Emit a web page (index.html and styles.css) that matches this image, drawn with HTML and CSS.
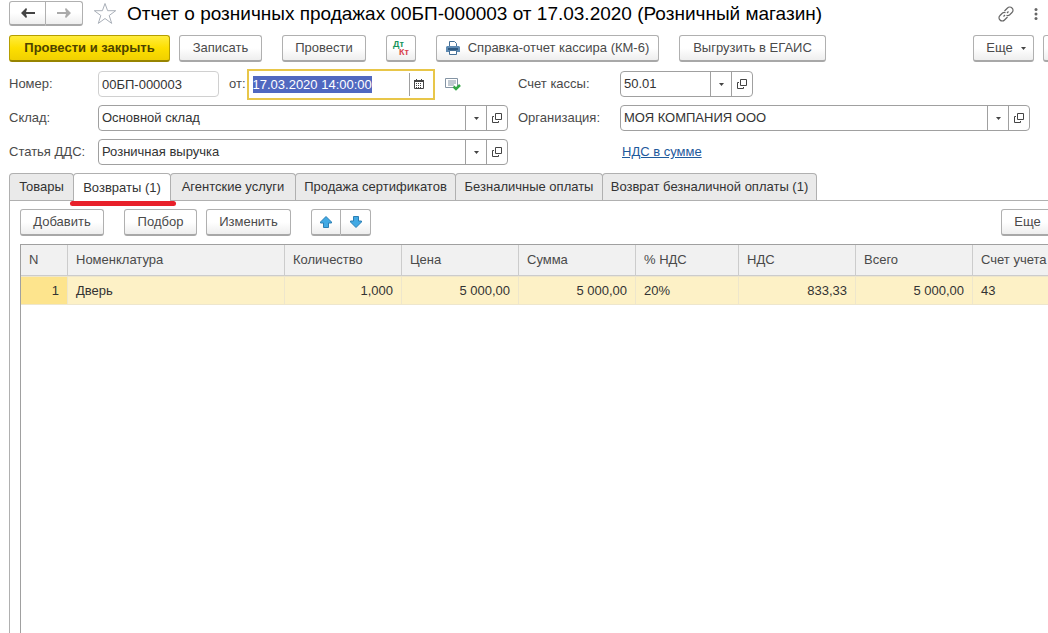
FILE: index.html
```html
<!DOCTYPE html>
<html lang="ru">
<head>
<meta charset="utf-8">
<meta name="viewport" content="width=device-width, initial-scale=1">
<title>Отчет о розничных продажах</title>
<link rel="stylesheet" href="styles.css">
</head>
<body>
<svg class="defs" aria-hidden="true">
  <symbol id="open" viewBox="0 0 10 10"><path d="M3.500 .5h6v6h-6z M2 3.500H.5v6h6V8" fill="none" stroke="#444"/></symbol>
  <symbol id="caret" viewBox="0 0 5 3"><path d="M0 0h5L2.5 3z" fill="#444"/></symbol>
</svg>
<header class="titlebar">
  <div class="pair nav">
    <button class="btn" aria-label="Назад"><svg width="14" height="10" viewBox="0 0 14 10"><path d="M14 4v2H5l1 3-1 1-5-5 5-5 1 1-1 3z" fill="#444"/></svg></button>
    <button class="btn" aria-label="Вперед"><svg width="14" height="10" viewBox="0 0 14 10"><path d="M0 4v2h9l-1 3 1 1 5-5-5-5-1 1 1 3z" fill="#aaa"/></svg></button>
  </div>
  <button class="plain star" aria-label="В избранное"><svg width="24" height="23" viewBox="0 0 24 23"><path d="M12 1.500l2.600 7.200h8.100l-6.500 4.800 2.500 7.900-6.700-4.900-6.700 4.900 2.500-7.900L1.300 8.700h8.100z" fill="#fff" stroke="#a9afb8"/></svg></button>
  <h1>Отчет о розничных продажах 00БП-000003 от 17.03.2020 (Розничный магазин)</h1>
  <button class="plain" aria-label="Ссылка"><svg width="16" height="16" viewBox="0 0 16 16"><g fill="none" stroke="#666" stroke-width="1.200"><path d="M6.500 5L9.500 2a3 3 0 0 1 4.500 0 3 3 0 0 1 0 4.500L11.500 9q-1.500 1-3 .3M9.500 11L6.500 14A3 3 0 0 1 2 14a3 3 0 0 1 0-4.500L4.500 7q1.500-1 3-.3M5.500 10.500l1.500-1.500M9 7l1.500-1.500"/></g></svg></button>
  <button class="plain dots" aria-label="Меню"><svg width="4" height="12" viewBox="0 0 4 12"><g fill="#666"><circle cx="2" cy="1.500" r="1.500"/><circle cx="2" cy="6" r="1.500"/><circle cx="2" cy="10.500" r="1.500"/></g></svg></button>
</header>
<div class="commands">
  <button class="btn primary">Провести и закрыть</button>
  <button class="btn write">Записать</button>
  <button class="btn post">Провести</button>
  <button class="btn dtkt" aria-label="Дт Кт"><span class="dt">Дт</span><span class="kt">Кт</span></button>
  <button class="btn print"><svg width="14" height="14" viewBox="0 0 14 14"><path d="M3.500 5V.5H8.500L10.500 2.500v3" fill="#fff" stroke="#456f96"/><path d="M1 5h12l1 1v5H0V6z" fill="#5f8bb3"/><path d="M2 7h10v2H2z" fill="#2f5a82"/><path d="M3.500 9.500h7v4h-7z" fill="#fff" stroke="#456f96"/></svg>Справка-отчет кассира (КМ-6)</button>
  <button class="btn egais">Выгрузить в ЕГАИС</button>
  <button class="btn more">Еще<svg width="5" height="3"><use href="#caret"/></svg></button>
  <button class="btn help" aria-label="Справка"></button>
</div>
<form class="form">
  <label for="num">Номер:</label>
  <div class="line">
    <input class="num" id="num" value="00БП-000003">
    <label for="date">от:</label>
    <div class="date">
      <div class="datetext"><input id="date" value="17.03.2020 14:00:00"></div>
      <button type="button" class="plain cal" aria-label="Календарь"><svg width="10" height="10" viewBox="0 0 10 10"><path d="M.5 1.500h9v8h-9z" fill="#fff" stroke="#444"/><path d="M0 1h10v2H0zM2 0h1v1H2zM7 0h1v1H7z" fill="#444"/><path d="M2 4.500h6M2 6.500h6M2 8.500h6" stroke="#444" stroke-dasharray="1 1"/></svg></button>
    </div>
    <svg class="posted" width="16" height="13" viewBox="0 0 16 13"><path d="M.5.5h12v9H.5z" fill="#fff" stroke="#8494a4"/><path d="M3 3h8M3 5h8M3 7h6" stroke="#8494a4"/><path d="M8.500 8.500l2.500 2.500L15 7" fill="none" stroke="#35a847" stroke-width="2.500"/></svg>
  </div>
  <label for="acc">Счет кассы:</label>
  <div class="combo short"><input id="acc" value="50.01"><button type="button" aria-label="Выбрать"><svg width="5" height="3"><use href="#caret"/></svg></button><button type="button" aria-label="Открыть"><svg width="10" height="10"><use href="#open"/></svg></button></div>

  <label for="store">Склад:</label>
  <div class="combo"><input id="store" value="Основной склад"><button type="button" aria-label="Выбрать"><svg width="5" height="3"><use href="#caret"/></svg></button><button type="button" aria-label="Открыть"><svg width="10" height="10"><use href="#open"/></svg></button></div>
  <label for="org">Организация:</label>
  <div class="combo"><input id="org" value="МОЯ КОМПАНИЯ ООО"><button type="button" aria-label="Выбрать"><svg width="5" height="3"><use href="#caret"/></svg></button><button type="button" aria-label="Открыть"><svg width="10" height="10"><use href="#open"/></svg></button></div>

  <label for="dds">Статья ДДС:</label>
  <div class="combo"><input id="dds" value="Розничная выручка"><button type="button" aria-label="Выбрать"><svg width="5" height="3"><use href="#caret"/></svg></button><button type="button" aria-label="Открыть"><svg width="10" height="10"><use href="#open"/></svg></button></div>
  <a class="vat" href="#vat">НДС в сумме</a>
</form>
<nav class="tabs" role="tablist">
  <button role="tab" class="t-goods">Товары</button>
  <button role="tab" class="t-returns active" aria-selected="true">Возвраты (1)</button>
  <button role="tab" class="t-agent">Агентские услуги</button>
  <button role="tab" class="t-cert">Продажа сертификатов</button>
  <button role="tab" class="t-card">Безналичные оплаты</button>
  <button role="tab" class="t-refund">Возврат безналичной оплаты (1)</button>
</nav>
<main class="panel">
  <div class="tools">
    <button class="btn add">Добавить</button>
    <button class="btn pick">Подбор</button>
    <button class="btn edit">Изменить</button>
    <div class="pair arrows">
      <button class="btn" aria-label="Вверх"><svg width="12" height="12" viewBox="0 0 12 12"><path d="M6 .5L11.500 6v1H8.500v4.500h-5V7H.5V6z" fill="#41a9e4" stroke="#2b7fb4"/></svg></button>
      <button class="btn" aria-label="Вниз"><svg width="12" height="12" viewBox="0 0 12 12"><path d="M6 11.500L.5 6V5h3V.5h5V5h3v1z" fill="#41a9e4" stroke="#2b7fb4"/></svg></button>
    </div>
    <button class="btn more">Еще<svg width="5" height="3"><use href="#caret"/></svg></button>
  </div>
  <div class="grid">
    <table>
      <colgroup><col class="c-n"><col><col class="c-m"><col class="c-m"><col class="c-m"><col class="c-p"><col class="c-m"><col class="c-m"><col class="c-l"></colgroup>
      <thead><tr><th>N</th><th>Номенклатура</th><th>Количество</th><th>Цена</th><th>Сумма</th><th>% НДС</th><th>НДС</th><th>Всего</th><th>Счет учета</th></tr></thead>
      <tbody><tr><td class="r cur">1</td><td>Дверь</td><td class="r">1,000</td><td class="r">5 000,00</td><td class="r">5 000,00</td><td>20%</td><td class="r">833,33</td><td class="r">5 000,00</td><td>43</td></tr></tbody>
    </table>
  </div>
</main>
</body>
</html>
```
FILE: styles.css
```css
* { box-sizing: border-box; }
body {
  margin: 0;
  min-height: 100vh;
  display: flex;
  flex-direction: column;
  overflow: hidden;
  background: #fff;
  color: #333;
  font: 13px/16px "Liberation Sans", Arial, sans-serif;
}
button, input { font: inherit; color: inherit; margin: 0; }
button { white-space: nowrap; }
svg { flex: none; display: block; }
.defs { position: absolute; width: 0; height: 0; }

.btn {
  display: flex;
  align-items: center;
  justify-content: center;
  flex: none;
  height: 27px;
  padding: 0;
  color: #4a4a4a;
  border: 1px solid #b0b0b0;
  border-bottom: 2px solid #a8a8a8;
  border-radius: 3px;
  background: linear-gradient(#fff 50%, #eee);
}
.plain { display: flex; padding: 0; border: 0; background: none; }
.pair { display: flex; flex: none; }
.pair .btn:first-child { border-radius: 3px 0 0 3px; }
.pair .btn:last-child { border-radius: 0 3px 3px 0; border-left: 0; }

.titlebar { display: flex; align-items: center; height: 27px; padding: 0 9px; }
.nav .btn { width: 37px; height: 25px; }
.star { margin: 0 10px; }
h1 { flex: 1; margin: 0; font-size: 19px; line-height: 24px; font-weight: 400; color: #000; white-space: nowrap; }
.dots { margin: 0 1px 0 20px; }

.commands { display: flex; height: 41px; padding: 8px 0 0 9px; overflow: hidden; }
.primary {
  width: 161px;
  font-weight: 700;
  color: #4d4200;
  border-color: #b59e00 #b59e00 #978400;
  background: linear-gradient(#ffec3d, #fddf00 50%, #f0d000);
}
.write { width: 83px; margin-left: 9px; }
.post { width: 84px; margin-left: 20px; }
.dtkt { width: 30px; margin-left: 20px; flex-direction: column; align-items: stretch; padding: 0 6px; font-size: 9px; line-height: 8px; font-weight: 700; }
.dt { color: #16945a; text-align: left; }
.kt { color: #d8424c; text-align: right; }
.print { width: 223px; margin-left: 20px; gap: 8px; }
.egais { width: 147px; margin-left: 20px; }
.more { width: 61px; gap: 8px; margin-left: auto; padding-left: 5px; }
.help { width: 27px; margin: 0 -22px 0 9px; }

.form {
  display: grid;
  grid-template-columns: 89px minmax(0, 1fr) 112px minmax(0, 1fr);
  grid-auto-rows: 26px;
  row-gap: 8px;
  align-items: center;
  padding: 3px 18px 8px 9px;
}
.form label { color: #4a4a4a; }
.form > label:nth-of-type(even) { padding-left: 10px; }
.line { display: flex; align-items: center; }
.line label { margin-left: 10px; }
input { min-width: 0; border: 0; outline: 0; background: none; padding: 0 3px; }
.num { width: 121px; height: 26px; border: 1px solid #d0d0d0; border-radius: 4px; }
.date { display: flex; align-items: center; width: 188px; height: 31px; margin: -3px 0 -3px 1px; border: 2px solid #e8c649; }
.datetext { flex: 1; padding-left: 4px; }
.datetext input { display: block; width: 119px; height: 17px; padding: 0; background: #5068c0; color: #fff; }
.cal { width: 24px; height: 23px; padding-right: 4px; align-items: center; justify-content: center; border-left: 1px solid #a0a0a0; }
.posted { margin-left: 10px; }
.combo { display: flex; height: 26px; border: 1px solid #a0a0a0; border-radius: 4px; }
.combo input { flex: 1; }
.combo button { display: flex; align-items: center; justify-content: center; width: 21px; padding: 0; border: 0; border-left: 1px solid #a0a0a0; background: none; }
.short { width: 133px; }
.vat { grid-column: 4; padding-left: 2px; color: #1f5a9c; }

.tabs { display: flex; flex: none; padding-left: 9px; }
.tabs button {
  height: 27px;
  padding: 0;
  border: 1px solid #b0b0b0;
  border-bottom: 0;
  border-radius: 4px 4px 0 0;
  background: #eaeaea;
}
.tabs button + button { margin-left: -1px; }
.t-goods { width: 65px; }
.t-returns { width: 98px; }
.t-agent { width: 126px; }
.t-cert { width: 161px; }
.t-card { width: 148px; }
.t-refund { width: 215px; }
.tabs .active { position: relative; height: 28px; margin-bottom: -1px; background: #fff; }
.active::after {
  content: "";
  position: absolute;
  left: -4px;
  right: -6px;
  bottom: -5px;
  height: 5px;
  border-radius: 3px;
  background: #e8202a;
}

.panel {
  flex: 1;
  display: flex;
  flex-direction: column;
  margin-left: 9px;
  padding: 8px 0 0 10px;
  border: solid #b0b0b0;
  border-width: 1px 0 0 1px;
}
.tools { display: flex; margin-right: -14px; }
.add { width: 84px; }
.pick { width: 73px; margin-left: 20px; }
.edit { width: 85px; margin-left: 9px; }
.arrows { margin-left: 20px; }
.arrows .btn { width: 30px; }
.grid { flex: 1; margin-top: 8px; border: solid #a0a0a0; border-width: 1px 0 0 1px; }
table { width: 100%; table-layout: fixed; border-collapse: separate; border-spacing: 0; }
.c-n { width: 47px; }
.c-m { width: 117px; }
.c-p { width: 103px; }
.c-l { width: 75px; }
th, td { padding: 0 8px; text-align: left; font-weight: 400; white-space: nowrap; overflow: hidden; }
th:last-child { padding-right: 0; }
th { height: 31px; color: #4a4a4a; background: #f1f1f1; border-right: 1px solid #ccc; border-bottom: 1px solid #ccc; }
td { height: 29px; background: #fdf1c6; border: solid #eee6cc; border-width: 1px 1px 1px 0; }
th:last-child, td:last-child { border-right: 0; }
.r { text-align: right; }
.cur { background: #fde48d; }
```
